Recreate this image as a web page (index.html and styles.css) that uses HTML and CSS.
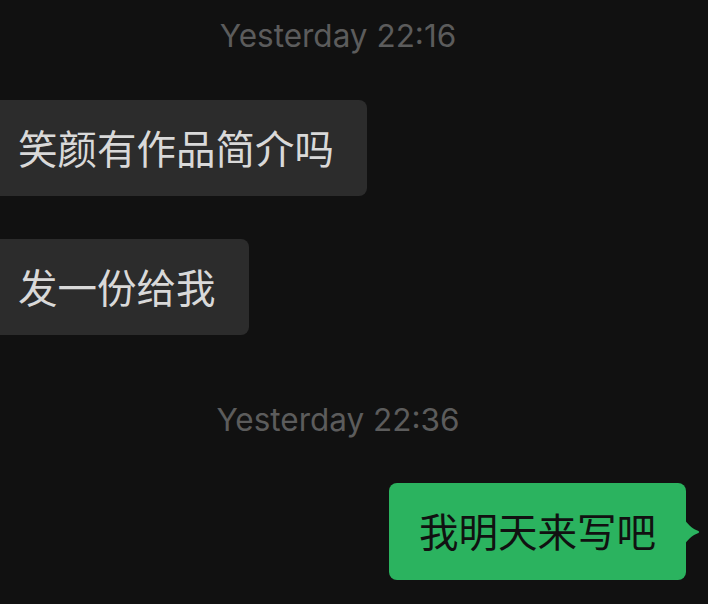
FILE: index.html
```html
<!DOCTYPE html>
<html lang="zh-CN">
<head>
    <meta charset="UTF-8">
    <meta name="viewport" content="width=device-width, initial-scale=1.0">
    <title>Chat</title>
    <link rel="stylesheet" href="styles.css">
</head>
<body>
    <div class="chat">
        <div class="time">Yesterday 22:16</div>

        <div class="msg msg-in msg-first">
            <div class="bubble">笑颜有作品简介吗</div>
        </div>
        <div class="msg msg-in">
            <div class="bubble">发一份给我</div>
        </div>

        <div class="time time-later">Yesterday 22:36</div>

        <div class="msg msg-out">
            <div class="bubble">
                我明天来写吧
                <svg class="tail" width="15" height="24" viewBox="0 0 15 24">
                    <path d="M0 0 C4 6 9 9.5 13.5 11 Q15 12 13.5 13 C9 14.5 4 18 0 24 Z" fill="#2bb35f"/>
                </svg>
            </div>
        </div>
    </div>
</body>
</html>
```

FILE: styles.css
```css
body {
    margin: 0;
    background-color: #111111;
    font-family: "Noto Sans CJK SC", "Noto Sans", sans-serif;
    overflow: hidden;
}
.chat {
    display: flex;
    flex-direction: column;
    padding-top: 16px;
}
.time {
    font-family: Inter, "Noto Sans", sans-serif;
    font-size: 31.5px;
    line-height: 40px;
    color: #5c5c5c;
    text-align: center;
    padding-right: 32px;
}
.time-later {
    margin-top: 65px;
}
.msg {
    display: flex;
    margin-top: 43px;
}
.msg-first {
    margin-top: 44px;
}
.msg-out {
    justify-content: flex-end;
    padding-right: 22px;
}
.bubble {
    font-size: 39.5px;
    line-height: 56px;
    padding: 19px 33px 21px 38px;
    border-radius: 8px;
    position: relative;
}
.msg-in .bubble {
    margin-left: -20px;
    background-color: #2c2c2c;
    color: #d9d9d9;
}
.msg-out .bubble {
    padding: 19px 30px 22px 30px;
    background-color: #2bb35f;
    color: #111111;
}
.tail {
    position: absolute;
    right: -14px;
    top: 37px;
}
```
